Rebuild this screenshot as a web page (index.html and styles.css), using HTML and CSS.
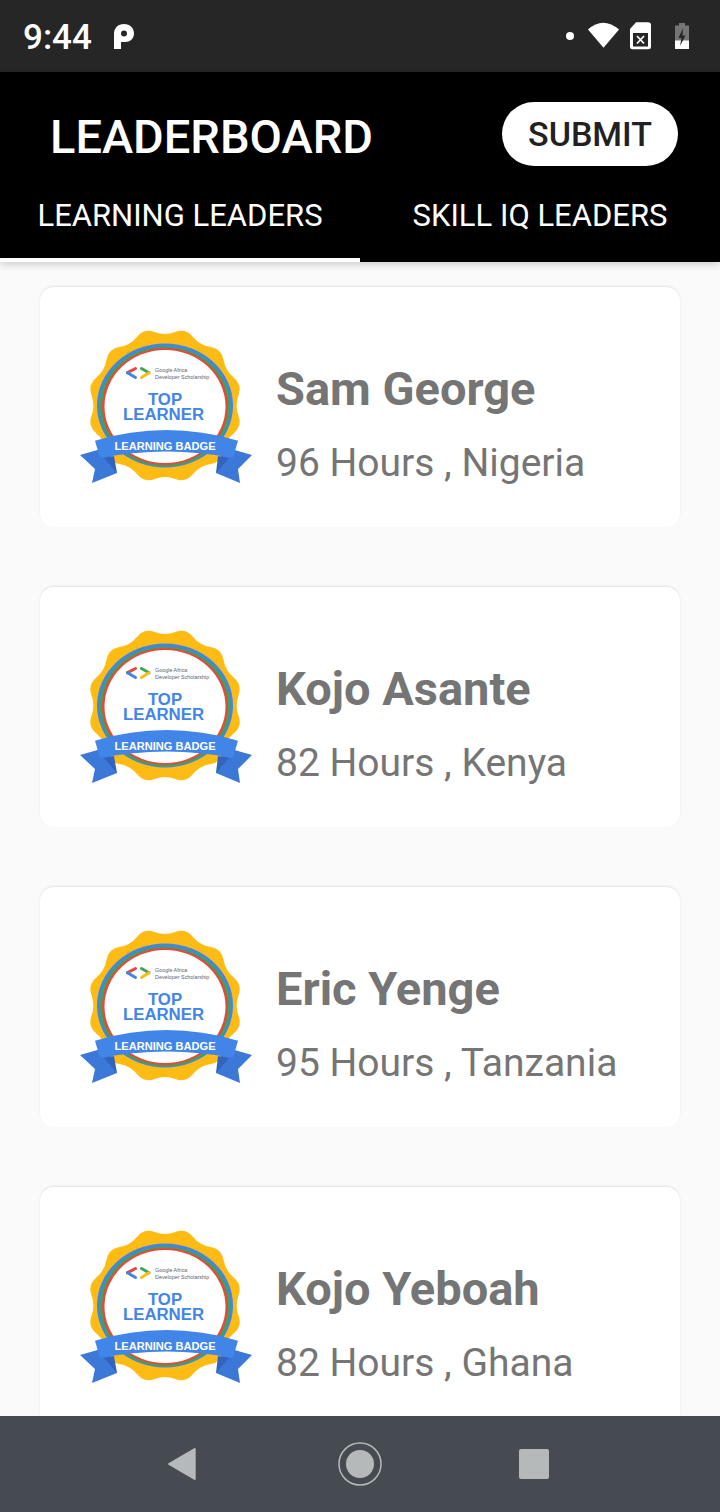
FILE: index.html
```html
<!DOCTYPE html>
<html lang="en">
<head>
    <meta charset="UTF-8">
    <meta name="viewport" content="width=device-width, initial-scale=1.0">
    <title>Leaderboard</title>
    <link rel="stylesheet" href="styles.css">
</head>
<body>
    <svg class="defs" width="0" height="0">
        <symbol id="badge-art" viewBox="0 0 190 175">
            <path fill="#fdbb14" transform="translate(95 85.5) rotate(15) scale(1.04)" d="M70.86 8.67 Q64.72 17.34 65.7 27.92 T57.03 42.94 T42.94 57.03 T27.92 65.7 T8.67 70.86 T-8.67 70.86 T-27.92 65.7 T-42.94 57.03 T-57.03 42.94 T-65.7 27.92 T-70.86 8.67 T-70.86 -8.67 T-65.7 -27.92 T-57.03 -42.94 T-42.94 -57.03 T-27.92 -65.7 T-8.67 -70.86 T8.67 -70.86 T27.92 -65.7 T42.94 -57.03 T57.03 -42.94 T65.7 -27.92 T70.86 -8.67 T70.86 8.67 Z"/>
            <ellipse cx="95" cy="85.5" rx="68" ry="62" fill="#4285e8"/>
            <ellipse cx="95" cy="86.5" rx="65.500" ry="60" fill="#3ba55a"/>
            <ellipse cx="95" cy="86.5" rx="63" ry="58.500" fill="#e8483a"/>
            <ellipse cx="95" cy="86.5" rx="60.500" ry="56.500" fill="#fff"/>
            <path d="M65.500 48.500 L57.500 52.700" stroke="#e8483a" stroke-width="3" stroke-linecap="round"/>
            <path d="M57.500 52.700 L65.500 57.500" stroke="#4285e8" stroke-width="3" stroke-linecap="round"/>
            <path d="M71.500 48.500 L79 52.700" stroke="#3ba55a" stroke-width="3" stroke-linecap="round"/>
            <path d="M79 52.700 L71.500 57.500" stroke="#fdbb14" stroke-width="3" stroke-linecap="round"/>
            <path fill="#3b78d8" d="M10 135 L38 127 L47 153 L22 163 L25 149 Z"/>
            <path fill="#3b78d8" d="M182 135 L154 127 L146 153 L170 163 L168 149 Z"/>
            <path fill="#3264bd" d="M34 138 L47 153 L44 136 Z"/>
            <path fill="#3264bd" d="M159 138 L146 153 L148 136 Z"/>
            <path fill="#4285e8" d="M25 120.700 Q96.500 99.500 168 120.700 L163 138 Q96.500 125 30 138 Z"/>
        </symbol>
    </svg>

    <div class="status-bar">
        <div class="status-left">
            <span class="clock">9:44</span>
            <svg class="icon-p" width="20" height="26" viewBox="0 0 20 26">
                <path fill="#fff" fill-rule="evenodd" d="M0 10 C0 4 4 0 10 0 C16 0 20 4 20 9.500 C20 14.500 16 18 11 18 L7 18 L7 25 L0 25 Z M10 6.500 A3 3 0 1 0 10 12.500 A3 3 0 1 0 10 6.500 Z"/>
            </svg>
        </div>
        <svg class="status-right" width="130" height="30" viewBox="0 0 130 30">
            <circle cx="10" cy="14" r="4" fill="#fff"/>
            <path fill="#fff" d="M28 7.500 Q43 -6 59 7.500 L43.500 25.700 Z"/>
            <path fill="#fff" d="M76 0.300 L88 0.300 Q91 0.300 91 3 L91 25 Q91 27.300 88.500 27.300 L72.500 27.300 Q70 27.300 70 25 L70 7 Z"/>
            <rect x="73" y="11" width="15" height="13.500" fill="#262626"/>
            <path d="M77 14 L84 21.500 M84 14 L77 21.500" stroke="#fff" stroke-width="1.800"/>
            <path fill="#757575" d="M119 3.500 L119 1 L125 1 L125 3.500 L129 3.500 L129 27 L115 27 L115 3.500 Z"/>
            <rect x="115" y="18.500" width="14" height="8.500" fill="#fff"/>
            <path fill="#262626" d="M123 6 L118.500 16 L121.500 16 L120 24 L125.500 13.500 L122.500 13.500 Z"/>
        </svg>
    </div>

    <header class="app-bar">
        <div class="app-bar-top">
            <h1>LEADERBOARD</h1>
            <button class="submit-btn">SUBMIT</button>
        </div>
        <div class="tabs">
            <div class="tab active">LEARNING LEADERS</div>
            <div class="tab">SKILL IQ LEADERS</div>
        </div>
    </header>

    <main class="list">
        <div class="card">
            <svg class="badge" viewBox="0 0 190 175">
                <use href="#badge-art"/>
                <text class="badge-small"><tspan x="85" y="52">Google Africa</tspan><tspan x="85" y="59">Developer Scholarship</tspan></text>
                <text class="badge-big"><tspan x="95" y="85">TOP</tspan><tspan x="93.500" y="100">LEARNER</tspan></text>
                <text class="badge-ribbon" x="95" y="129.500">LEARNING BADGE</text>
            </svg>
            <div class="info">
                <div class="name">Sam George</div>
                <div class="hours">96 Hours , Nigeria</div>
            </div>
        </div>
        <div class="card">
            <svg class="badge" viewBox="0 0 190 175">
                <use href="#badge-art"/>
                <text class="badge-small"><tspan x="85" y="52">Google Africa</tspan><tspan x="85" y="59">Developer Scholarship</tspan></text>
                <text class="badge-big"><tspan x="95" y="85">TOP</tspan><tspan x="93.500" y="100">LEARNER</tspan></text>
                <text class="badge-ribbon" x="95" y="129.500">LEARNING BADGE</text>
            </svg>
            <div class="info">
                <div class="name">Kojo Asante</div>
                <div class="hours">82 Hours , Kenya</div>
            </div>
        </div>
        <div class="card">
            <svg class="badge" viewBox="0 0 190 175">
                <use href="#badge-art"/>
                <text class="badge-small"><tspan x="85" y="52">Google Africa</tspan><tspan x="85" y="59">Developer Scholarship</tspan></text>
                <text class="badge-big"><tspan x="95" y="85">TOP</tspan><tspan x="93.500" y="100">LEARNER</tspan></text>
                <text class="badge-ribbon" x="95" y="129.500">LEARNING BADGE</text>
            </svg>
            <div class="info">
                <div class="name">Eric Yenge</div>
                <div class="hours">95 Hours , Tanzania</div>
            </div>
        </div>
        <div class="card">
            <svg class="badge" viewBox="0 0 190 175">
                <use href="#badge-art"/>
                <text class="badge-small"><tspan x="85" y="52">Google Africa</tspan><tspan x="85" y="59">Developer Scholarship</tspan></text>
                <text class="badge-big"><tspan x="95" y="85">TOP</tspan><tspan x="93.500" y="100">LEARNER</tspan></text>
                <text class="badge-ribbon" x="95" y="129.500">LEARNING BADGE</text>
            </svg>
            <div class="info">
                <div class="name">Kojo Yeboah</div>
                <div class="hours">82 Hours , Ghana</div>
            </div>
        </div>
    </main>

    <nav class="nav-bar">
        <svg width="440" height="96" viewBox="0 0 440 96">
            <path fill="#b5b9ba" stroke="#b5b9ba" stroke-width="2" stroke-linejoin="round" d="M29 48 L54.700 33 L54.700 63 Z"/>
            <circle cx="220" cy="48" r="21" fill="none" stroke="#b5b9ba" stroke-width="1.500"/>
            <circle cx="220" cy="48" r="14" fill="#b5b9ba"/>
            <rect x="379" y="33" width="30" height="30" rx="2" fill="#b5b9ba"/>
        </svg>
    </nav>
</body>
</html>
```

FILE: styles.css
```css
* {
    box-sizing: border-box;
}

body {
    margin: 0;
    height: 1512px;
    display: flex;
    flex-direction: column;
    overflow: hidden;
    background-color: #fafafa;
    font-family: Roboto, "Liberation Sans", sans-serif;
}

.defs {
    position: absolute;
}

.status-bar {
    height: 72px;
    flex-shrink: 0;
    display: flex;
    justify-content: space-between;
    align-items: center;
    padding: 0 30px 0 23px;
    background-color: #262626;
    color: #fff;
}

.status-left {
    display: flex;
    align-items: center;
    gap: 22px;
}

.clock {
    margin-top: 3px;
    font-size: 35px;
    font-weight: 500;
    line-height: 69px;
}

.icon-p {
    margin-top: 2px;
}

.status-right {
    margin-top: 1px;
}

.app-bar {
    flex-shrink: 0;
    background-color: #000;
    color: #fff;
    position: relative;
    box-shadow: 0 2px 8px rgba(0, 0, 0, 0.2);
}

.app-bar-top {
    height: 126px;
    display: flex;
    justify-content: space-between;
    align-items: center;
    padding: 0 43px 0 50px;
}

h1 {
    margin: 2px 0 0;
    font-size: 47px;
    font-weight: 500;
}

.submit-btn {
    width: 176px;
    height: 64px;
    margin: -2px -1px 0 0;
    border: none;
    border-radius: 32px;
    background-color: #fff;
    color: #212121;
    font-family: inherit;
    font-size: 34px;
    font-weight: 500;
}

.tabs {
    display: flex;
}

.tab {
    flex: 1;
    height: 64px;
    line-height: 36px;
    text-align: center;
    font-size: 31px;
}

.tab.active {
    border-bottom: 4px solid #fff;
}

.list {
    flex: 1;
    overflow: hidden;
    display: flex;
    flex-direction: column;
    gap: 60px;
    padding: 25px 40px 0;
}

.card {
    height: 240px;
    flex-shrink: 0;
    display: flex;
    align-items: center;
    gap: 16px;
    padding-left: 30px;
    border-radius: 14px;
    background-color: #fff;
    box-shadow: 0 -1px 2px rgba(0, 0, 0, 0.1);
}

.badge {
    width: 190px;
    height: 175px;
    flex-shrink: 0;
}

.badge-small {
    font-family: "Liberation Sans", sans-serif;
    font-size: 5.400px;
    fill: #5f6368;
}

.badge-big {
    font-family: "Liberation Sans", sans-serif;
    font-size: 16.800px;
    font-weight: 700;
    fill: #4285e8;
    text-anchor: middle;
}

.badge-ribbon {
    font-family: "Liberation Sans", sans-serif;
    font-size: 11.100px;
    font-weight: 700;
    fill: #fff;
    text-anchor: middle;
}

.info {
    padding-top: 33px;
    color: #757575;
}

.name {
    font-size: 47px;
    font-weight: 700;
    line-height: 54px;
}

.hours {
    margin-top: 25px;
    font-size: 39px;
    line-height: 44px;
}

.nav-bar {
    height: 96px;
    flex-shrink: 0;
    display: flex;
    justify-content: center;
    background-color: #454b50;
}
```
